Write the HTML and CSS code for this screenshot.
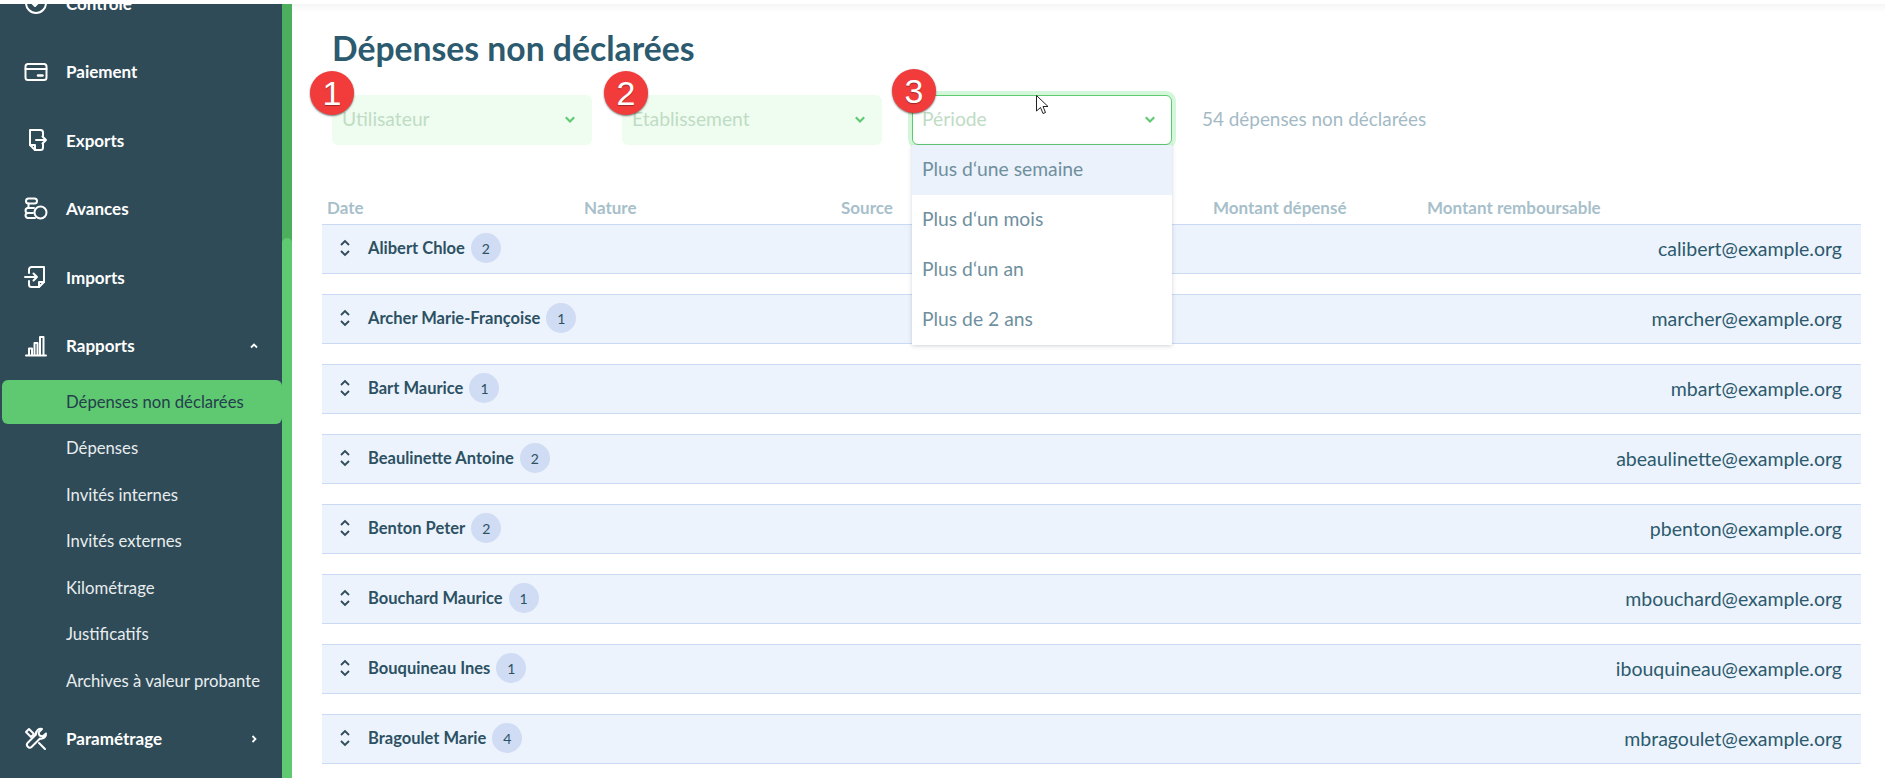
FILE: index.html
```html
<!DOCTYPE html>
<html lang="fr">
<head>
<meta charset="utf-8">
<title>Dépenses non déclarées</title>
<link rel="stylesheet" href="styles.css">
</head>
<body>
<div class="app">
  <aside class="sidebar">
    <nav class="nav">
      <a class="nav-item"><svg class="nav-icon" viewBox="0 0 24 24"><circle cx="12" cy="12" r="10"/><path d="M8 12l3 3 5-5"/></svg><span>Contrôle</span></a>
      <a class="nav-item"><svg class="nav-icon" viewBox="0 0 24 24"><rect x="1.500" y="4" width="21" height="16" rx="2.500"/><path d="M1.500 9h21"/><path d="M14 15.500h4.500" class="thick"/></svg><span>Paiement</span></a>
      <a class="nav-item"><svg class="nav-icon" viewBox="0 0 24 24"><path d="M19 8V4.500A2.500 2.500 0 0 0 16.500 2H6v15l5 5h5.500a2.500 2.500 0 0 0 2.500-2.500V16"/><path d="M6 17h5v5"/><path d="M12 12h10M18.500 8.500L22 12l-3.500 3.500"/></svg><span>Exports</span></a>
      <a class="nav-item"><svg class="nav-icon" viewBox="0 0 24 24"><rect x="2" y="1.500" width="11" height="5" rx="2.500"/><path d="M4.500 6.500v4M4 11h6M4 16h5M4 21h7"/><path d="M4 11a2.500 2.500 0 0 0 0 5 2.500 2.500 0 0 0 0 5"/><circle cx="16.500" cy="15.500" r="6"/></svg><span>Avances</span></a>
      <a class="nav-item"><svg class="nav-icon" viewBox="0 0 24 24"><path d="M5 8V4.500A2.500 2.500 0 0 1 7.500 2H20v15l-5 5H7.500A2.500 2.500 0 0 1 5 19.500V16"/><path d="M15 22v-5h5"/><path d="M1 12h12M9.500 8.500L13 12l-3.500 3.500"/></svg><span>Imports</span></a>
      <a class="nav-item"><svg class="nav-icon" viewBox="0 0 24 24"><path d="M2 21.500h20"/><path d="M5 21v-6.500h3V21M10.500 21V9h3v12M16 21V3h3.500v18"/></svg><span>Rapports</span><svg class="caret" viewBox="0 0 10 10"><path d="M2 6.500L5 3.500l3 3"/></svg></a>
      <div class="subnav">
        <a class="sub-item active">Dépenses non déclarées</a>
        <a class="sub-item">Dépenses</a>
        <a class="sub-item">Invités internes</a>
        <a class="sub-item">Invités externes</a>
        <a class="sub-item">Kilométrage</a>
        <a class="sub-item">Justificatifs</a>
        <a class="sub-item">Archives à valeur probante</a>
      </div>
      <a class="nav-item settings"><svg class="nav-icon" viewBox="0 0 24 24"><path d="M22 6.500l-3.500 3-3-1-1-3L18 2c-3-.8-6.500 1.500-6 5.500L3.500 16c-2 2.500 1.500 6 4 4l8.500-8.500c3.500.8 6.500-2 6-5z"/><path d="M2 5l3-3 5 5-3 3zM15 16l6 6"/></svg><span>Paramétrage</span><svg class="caret" viewBox="0 0 10 10"><path d="M3.500 2L6.500 5l-3 3"/></svg></a>
    </nav>
    <div class="scrollbar"><div class="thumb"></div></div>
  </aside>

  <main class="main">
    <h1 class="title">Dépenses non déclarées</h1>
    <div class="filters">
      <div class="select"><span>Utilisateur</span><svg class="chev" viewBox="0 0 10 10"><path d="M1.500 3.500L5 7l3.500-3.500"/></svg><b class="marker m1">1</b></div>
      <div class="select"><span>Etablissement</span><svg class="chev" viewBox="0 0 10 10"><path d="M1.500 3.500L5 7l3.500-3.500"/></svg><b class="marker m2">2</b></div>
      <div class="select open"><span>Période</span><svg class="chev" viewBox="0 0 10 10"><path d="M1.500 3.500L5 7l3.500-3.500"/></svg><b class="marker m3">3</b>
        <ul class="menu">
          <li class="hover">Plus d‘une semaine</li>
          <li>Plus d‘un mois</li>
          <li>Plus d‘un an</li>
          <li>Plus de 2 ans</li>
        </ul>
        <svg class="cursor" viewBox="0 0 12 20"><path d="M.500.500v15.500l4-3.500 2.500 6 2.500-1-2.500-6h5z"/></svg>
      </div>
      <div class="count">54 dépenses non déclarées</div>
    </div>

    <div class="table-head">
      <span>Date</span><span>Nature</span><span>Source</span><span></span><span>Montant dépensé</span><span>Montant remboursable</span>
    </div>
    <div class="rows">
      <div class="row"><svg class="updown" viewBox="0 0 12 20"><path d="M2 7l4-4 4 4M2 13l4 4 4-4"/></svg><span class="name">Alibert Chloe</span><span class="badge">2</span><span class="email">calibert@example.org</span></div>
      <div class="row"><svg class="updown" viewBox="0 0 12 20"><path d="M2 7l4-4 4 4M2 13l4 4 4-4"/></svg><span class="name">Archer Marie-Françoise</span><span class="badge">1</span><span class="email">marcher@example.org</span></div>
      <div class="row"><svg class="updown" viewBox="0 0 12 20"><path d="M2 7l4-4 4 4M2 13l4 4 4-4"/></svg><span class="name">Bart Maurice</span><span class="badge">1</span><span class="email">mbart@example.org</span></div>
      <div class="row"><svg class="updown" viewBox="0 0 12 20"><path d="M2 7l4-4 4 4M2 13l4 4 4-4"/></svg><span class="name">Beaulinette Antoine</span><span class="badge">2</span><span class="email">abeaulinette@example.org</span></div>
      <div class="row"><svg class="updown" viewBox="0 0 12 20"><path d="M2 7l4-4 4 4M2 13l4 4 4-4"/></svg><span class="name">Benton Peter</span><span class="badge">2</span><span class="email">pbenton@example.org</span></div>
      <div class="row"><svg class="updown" viewBox="0 0 12 20"><path d="M2 7l4-4 4 4M2 13l4 4 4-4"/></svg><span class="name">Bouchard Maurice</span><span class="badge">1</span><span class="email">mbouchard@example.org</span></div>
      <div class="row"><svg class="updown" viewBox="0 0 12 20"><path d="M2 7l4-4 4 4M2 13l4 4 4-4"/></svg><span class="name">Bouquineau Ines</span><span class="badge">1</span><span class="email">ibouquineau@example.org</span></div>
      <div class="row"><svg class="updown" viewBox="0 0 12 20"><path d="M2 7l4-4 4 4M2 13l4 4 4-4"/></svg><span class="name">Bragoulet Marie</span><span class="badge">4</span><span class="email">mbragoulet@example.org</span></div>
    </div>
  </main>
</div>
</body>
</html>
```

FILE: styles.css
```css
* { box-sizing: border-box; }
html, body { margin: 0; height: 100%; overflow: hidden; background: #fff; }
body { padding-top: 4px; font-family: "Lato", "Noto Sans", sans-serif; color: #2f4b57; }
.app { display: flex; height: 774px; }

/* Sidebar */
.sidebar { width: 292px; flex: none; display: flex; background: #2f4b57; overflow: hidden; }
.nav { width: 282px; flex: none; margin-top: -35px; padding-left: 2px; }
.nav-item { display: flex; align-items: center; height: 68.500px; padding-left: 22px; color: #fff; font-size: 17px; font-weight: 700; }
.nav-item span { margin-left: 18px; flex: 1; }
.nav-icon { width: 24px; height: 24px; flex: none; fill: none; stroke: #fff; stroke-width: 2; stroke-linejoin: round; stroke-linecap: round; }
.nav-icon .thick { stroke-width: 2.500; }
.caret { width: 10px; height: 10px; margin-right: 23px; fill: none; stroke: #fff; stroke-width: 1.800; }
.subnav { display: flex; flex-direction: column; }
.sub-item { display: flex; align-items: center; height: 46.500px; padding-left: 64px; color: #e8edef; font-size: 16.700px; font-weight: 400; }
.sub-item.active { height: 44px; margin-bottom: 1px; background: #5fc972; color: #24404b; border-radius: 6px; }
.settings { margin-top: .5px; }
.scrollbar { width: 10px; flex: none; background: #4caf5e; }
.thumb { height: 100%; margin-top: 234px; background: #5fc972; border-radius: 5px 5px 0 0; }

/* Main */
.main { flex: 1; min-width: 0; padding: 0 24px 0 30px; box-shadow: inset 0 12px 10px -10px rgba(0, 0, 0, .06); }
.title { margin: 24px 0 0 10px; font-size: 33.700px; line-height: 40px; font-weight: 700; color: #2c5a6e; }
.filters { display: flex; align-items: center; gap: 30px; margin: 27px 0 0 10px; height: 50px; }
.select { position: relative; width: 260px; height: 50px; display: flex; align-items: center; justify-content: space-between; padding: 0 16px 3px 10px; background: #effdf0; border-radius: 6px; color: #bfdcc4; font-size: 19.300px; }
.select.open { background: #fff; border: 1px solid #5fc972; box-shadow: 0 0 0 4px #d3f7d8; padding: 0 15px 3px 9px; }
.chev { width: 12px; height: 12px; fill: none; stroke: #5fc972; stroke-width: 1.800; }
.marker { position: absolute; z-index: 3; width: 44px; height: 44px; border-radius: 50%; display: flex; align-items: center; justify-content: center; background: #f23c3c; color: #fff; font-family: "Liberation Sans", sans-serif; font-size: 34px; font-weight: 400; text-shadow: 0 1px 1px rgba(0, 0, 0, .35); box-shadow: 0 1px 2px rgba(0, 0, 0, .55); }
.m1 { left: -22px; top: -24px; }
.m2 { left: -18px; top: -24px; }
.m3 { left: -21px; top: -27px; }
.menu { position: absolute; z-index: 2; left: -1px; top: 49px; width: 260px; margin: 0; padding: 0; list-style: none; background: #fff; box-shadow: 0 1px 4px rgba(60, 80, 110, .25); color: #6f8f9e; font-size: 19.300px; }
.menu li { height: 50px; line-height: 48px; padding-left: 10px; }
.menu .hover { background: #ebf2fb; }
.cursor { position: absolute; z-index: 4; left: 123px; top: -1px; width: 12px; height: 20px; fill: #fff; stroke: #222; stroke-width: 1; }
.count { color: #a3bac5; font-size: 18.900px; margin-bottom: 3px; }
.table-head { display: grid; grid-template-columns: 257px 257px 257px 115px 214px 1fr; margin: 46px 0 0 5px; height: 33px; align-items: center; color: #a7bfca; font-size: 17px; font-weight: 700; }
.rows { display: flex; flex-direction: column; gap: 20px; }
.row { display: flex; align-items: center; height: 50px; background: #ecf3fc; border-top: 1px solid #cadaf3; border-bottom: 1px solid #cadaf3; padding: 0 19px 2px 17px; }
.updown { width: 12px; height: 20px; flex: none; fill: none; stroke: #2f4b57; stroke-width: 1.800; }
.name { margin-left: 17px; font-size: 16.500px; font-weight: 700; color: #2c5163; }
.badge { width: 30px; height: 30px; margin-left: 6px; border-radius: 50%; background: #cfdcf3; display: flex; align-items: center; justify-content: center; font-size: 14px; color: #2c5163; }
.email { margin-left: auto; font-size: 19.500px; color: #2c5a6e; }
```
